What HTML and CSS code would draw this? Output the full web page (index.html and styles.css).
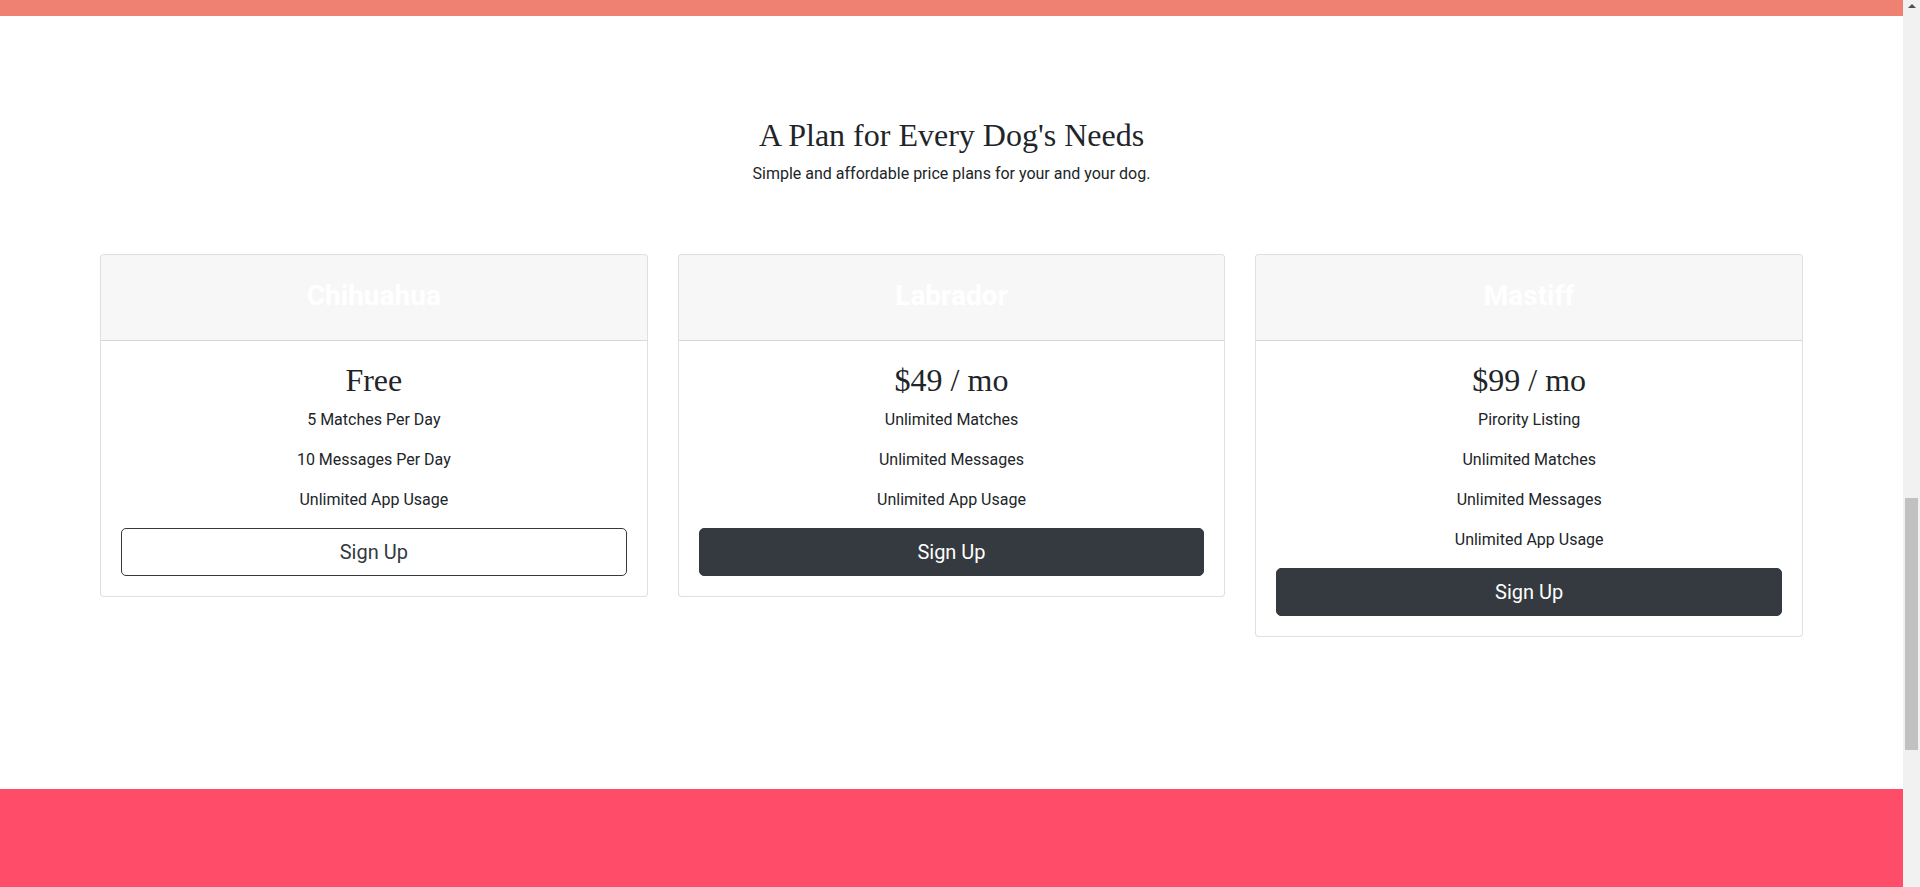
FILE: index.html
```html
<!DOCTYPE html>
<html lang="en">
<head>
<meta charset="utf-8">
<title>Pricing</title>
<link rel="stylesheet" href="styles.css">
</head>
<body>
<div class="viewport">
  <main class="page">
    <div class="testimonials-end"></div>
    <section class="pricing">
      <h2 class="pricing-title">A Plan for Every Dog's Needs</h2>
      <p class="pricing-sub">Simple and affordable price plans for your and your dog.</p>
      <div class="plans">
        <div class="card">
          <div class="card-header"><h3 class="plan-name">Chihuahua</h3></div>
          <div class="card-body">
            <h2 class="price">Free</h2>
            <p class="feature">5 Matches Per Day</p>
            <p class="feature">10 Messages Per Day</p>
            <p class="feature">Unlimited App Usage</p>
            <button class="btn btn-outline" type="button">Sign Up</button>
          </div>
        </div>
        <div class="card">
          <div class="card-header"><h3 class="plan-name">Labrador</h3></div>
          <div class="card-body">
            <h2 class="price">$49 / mo</h2>
            <p class="feature">Unlimited Matches</p>
            <p class="feature">Unlimited Messages</p>
            <p class="feature">Unlimited App Usage</p>
            <button class="btn btn-dark" type="button">Sign Up</button>
          </div>
        </div>
        <div class="card">
          <div class="card-header"><h3 class="plan-name">Mastiff</h3></div>
          <div class="card-body">
            <h2 class="price">$99 / mo</h2>
            <p class="feature">Pirority Listing</p>
            <p class="feature">Unlimited Matches</p>
            <p class="feature">Unlimited Messages</p>
            <p class="feature">Unlimited App Usage</p>
            <button class="btn btn-dark" type="button">Sign Up</button>
          </div>
        </div>
      </div>
    </section>
    <section class="cta"></section>
  </main>
  <div class="scrollbar">
    <div class="scroll-up"></div>
    <div class="scroll-thumb"></div>
  </div>
</div>
</body>
</html>
```

FILE: styles.css
```css
html, body {
  margin: 0;
  padding: 0;
  height: 887px;
  overflow: hidden;
  background: #fff;
}

.viewport {
  display: flex;
  height: 887px;
}

.page {
  flex: 1;
  min-width: 0;
  overflow: hidden;
  font-family: Roboto, "Liberation Sans", sans-serif;
  color: #212529;
}

.testimonials-end {
  height: 16px;
  background: #ef8172;
}

.pricing {
  padding: 100px 100px;
  text-align: center;
}

.pricing-title {
  margin: 0 0 8px;
  font-family: "Liberation Serif", serif;
  font-size: 32px;
  font-weight: 400;
  line-height: 1.2;
}

.pricing-sub {
  margin: 0 0 16px;
  font-size: 16px;
  line-height: 24px;
}

.plans {
  display: grid;
  grid-template-columns: repeat(3, 1fr);
  gap: 30px;
  align-items: start;
  padding: 52px 0;
}

.card {
  border: 1px solid rgba(0, 0, 0, 0.125);
  border-radius: 4px;
  background: #fff;
  overflow: hidden;
}

.card-header {
  height: 85px;
  padding: 0 20px;
  background: rgba(0, 0, 0, 0.03);
  border-bottom: 1px solid rgba(0, 0, 0, 0.125);
}

.plan-name {
  margin: 0;
  padding-top: 10px;
  font-size: 28px;
  font-weight: 700;
  line-height: 61px;
  color: #fff;
}

.card-body {
  padding: 20px;
}

.price {
  margin: 0 0 8px;
  font-family: "Liberation Serif", serif;
  font-size: 32px;
  font-weight: 400;
  line-height: 1.2;
}

.feature {
  margin: 0 0 16px;
  font-size: 16px;
  line-height: 24px;
}

.btn {
  display: block;
  width: 100%;
  height: 48px;
  box-sizing: border-box;
  padding: 8px 16px;
  border-radius: 5px;
  font-family: Roboto, "Liberation Sans", sans-serif;
  font-size: 20px;
  line-height: 30px;
}

.btn-outline {
  background: #fff;
  color: #343a40;
  border: 1px solid #343a40;
}

.btn-dark {
  background: #343a40;
  color: #fff;
  border: 1px solid #343a40;
}

.cta {
  height: 200px;
  background: #ff4c68;
}

.scrollbar {
  width: 17px;
  flex: none;
  background: #f1f1f1;
  display: flex;
  flex-direction: column;
  align-items: center;
}

.scroll-up {
  margin-top: 4px;
  width: 0;
  height: 0;
  border-left: 4px solid transparent;
  border-right: 4px solid transparent;
  border-bottom: 4px solid #505050;
}

.scroll-thumb {
  margin-top: 490px;
  width: 13px;
  height: 252px;
  background: #c1c1c1;
}
```
